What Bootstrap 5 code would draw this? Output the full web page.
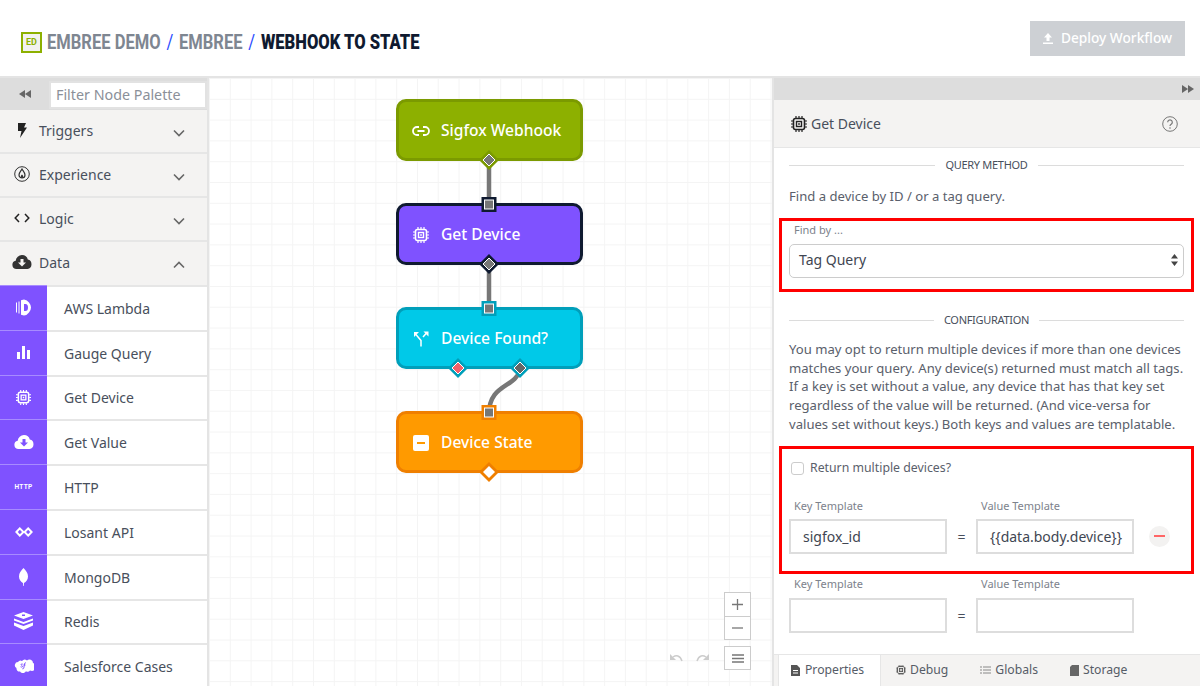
<!DOCTYPE html>
<html lang="en">
<head>
  <meta charset="UTF-8">
  <title>Webhook to State</title>
  <link href="https://cdn.jsdelivr.net/npm/bootstrap@5.3.0/dist/css/bootstrap.min.css" rel="stylesheet">
  <style>
    html, body { height: 100%; overflow: hidden; }
    body { font-family: "Noto Sans", sans-serif; color: #484f5c; font-size: 14px; background: #fff; }
    svg { display: block; flex: none; }

    .top-head { height: 78px; padding: 21px 15px 0 21px; border-bottom: 2px solid #e4e4e4; }
    .logo-box { width: 21px; height: 21px; border: 2px solid #8db000; background: #f2f2f0; color: #8db000; font: 700 9px/17px "Roboto", sans-serif; text-align: center; margin-right: 5px; margin-top: 11px; }
    .crumbs { font-family: "Roboto", sans-serif; font-weight: 700; font-size: 20px; line-height: 34px; color: #7e8691; margin-top: 4px; white-space: nowrap; transform: scaleX(.827); transform-origin: left center; }
    .crumbs i { font-style: normal; color: #2a4cff; margin: 0 7px; font-weight: 400; }
    .crumbs b { color: #0f1a30; }
    .deploy-btn { width: 155px; height: 35px; background: #cdd0d4; color: #fff; font-size: 13.7px; font-weight: 500; border: 0; border-radius: 0; padding: 0; }

    .work-area { height: 608px; }

    .palette { width: 209px; border-right: 2px solid #e4e4e4; background: #fff; overflow: hidden; }
    .tool-strip { height: 32px; background: #ddd; }
    .tool-strip .collapse-btn { width: 49px; color: #666; }
    .filter-box { width: 158px; height: 28px; margin-top: 3px; border: 2px solid #e2e2e2; background: #fff; padding: 0 5px; color: #8b9099; font-size: 14.3px; line-height: 24px; white-space: nowrap; }
    .group-row { height: 44px; background: #f4f3f2; border-bottom: 2px solid #e6e6e6; padding: 0 22px 2px 13px; font-size: 14px; }
    .group-row.last-group { height: 43px; border-bottom: 0; padding-bottom: 3px; }
    .group-row .lbl { margin-left: 8px; flex-grow: 1; }
    .group-row .chev { margin-top: 5px; color: #666; }
    .group-ico { width: 18px; display: flex; justify-content: center; color: #333; }
    .node-row { height: 44.8px; border-top: 2px solid #e6e6e6; font-size: 14px; }
    .node-ico { width: 47px; height: calc(100% + 2px); margin-top: -2px; background: #7f52ff; border-top: 1px solid #a78bff; color: #fff; display: flex; align-items: center; justify-content: center; font: 700 6.5px "Roboto", sans-serif; letter-spacing: .3px; }
    .node-row .lbl { margin-left: 17px; }

    .flow-canvas { flex: 1 1 0; position: relative; overflow: hidden; background-color: #fff;
      background-image: linear-gradient(#f4f4f4 1px, transparent 1px), linear-gradient(90deg, #f4f4f4 1px, transparent 1px);
      background-size: 20.8px 20.8px; background-position: 0 0; }
    .wf-node { position: absolute; left: 187px; width: 187px; height: 62px; border: 3px solid; border-radius: 10px; color: #fff; font-size: 15.6px; font-weight: 500; display: flex; align-items: center; padding: 2px 0 0 13px; }
    .wf-node .ico-slot { width: 18px; display: flex; justify-content: center; }
    .wf-node .lbl { margin-left: 11px; }
    .wf-webhook { top: 21px; background: #8db000; border-color: #7b9a00; }
    .wf-device { top: 125px; background: #7f52ff; border-color: #0f1a30; }
    .wf-found { top: 229px; background: #00c9e8; border-color: #009fba; }
    .wf-state { top: 333px; background: #ff9a00; border-color: #ef7f00; }
    .wf-lines { position: absolute; left: 0; top: 0; }
    .zoom-stack { position: absolute; left: 515px; top: 514px; width: 27px; border: 1px solid #ccc; background: #fff; color: #777; }
    .zoom-stack div { height: 23px; display: flex; align-items: center; justify-content: center; }
    .zoom-stack div + div { border-top: 1px solid #ccc; }
    .undo-group { position: absolute; left: 454px; top: 568px; display: flex; color: #ccc; }
    .undo-group div { width: 26px; height: 23px; display: flex; align-items: center; justify-content: center; }
    .menu-btn { position: absolute; left: 515px; top: 568px; width: 27px; height: 24px; border: 1px solid #ccc; background: #fff; display: flex; align-items: center; justify-content: center; color: #777; }

    .prop-panel { width: 428px; border-left: 2px solid #e4e4e4; position: relative; overflow: hidden; }
    .prop-strip { height: 22px; background: #ddd; padding-right: 6px; color: #666; }
    .prop-head { height: 48px; background: #f4f3f2; border-bottom: 1px solid #e6e6e6; padding: 0 22px 0 17px; font-size: 14px; }
    .prop-body { padding: 0 16px 0 15px; }
    .sec-title { font-size: 11px; color: #484f5c; letter-spacing: -.3px; height: 18px; margin-top: 8px; }
    .sec-title.second { margin-top: 19px; }
    .sec-title::before, .sec-title::after { content: ""; flex: 1; height: 1px; background: #dcdcdc; margin-top: 1px; }
    .sec-title span { padding: 0 10px; }
    .help-text { font-size: 13.1px; line-height: 18.8px; color: #5a606b; white-space: nowrap; }
    .find-text { margin-top: 13px; margin-bottom: 12px; }
    .config-text { margin-top: 11px; margin-bottom: 12.5px; }
    .red-box { border: 3px solid #f00; margin: 0 -10px; padding: 0 7px; }
    .find-box { padding-top: 2px; padding-bottom: 11px; }
    .tag-box { padding-top: 10px; }
    .field-lbl { font-size: 11px; color: #7d828c; line-height: 14px; padding-left: 5px; }
    .key-col { width: 187px; }
    .select-box { height: 34px; margin-top: 7px; border: 1px solid #ccc; border-radius: 5px; padding: 0 5px 2px 9px; font-size: 14px; color: #3f4652; }
    .text-box { width: 158px; height: 35px; border: 2px solid #ddd; padding: 0 12px; font-size: 14px; color: #3f4652; line-height: 31px; white-space: nowrap; overflow: hidden; }
    .eq-sign { width: 29px; text-align: center; font-size: 14px; }
    .check-line { font-size: 12.3px; line-height: 18.7px; color: #5a606b; margin-bottom: 21px; }
    .check-mark { width: 13px; height: 13px; border: 1px solid #ccc; border-radius: 3px; background: #fff; margin: 0 6px 0 2px; }
    .input-line { margin-top: 6px; margin-bottom: 17px; }
    .minus-btn { width: 21px; height: 21px; border-radius: 50%; background: #f3f2f1; margin-left: 15px; display: flex; align-items: center; justify-content: center; }
    .minus-btn span { width: 11px; height: 2px; background: #f66; }
    .extra-labels { margin-top: 3px; }
    .extra-inputs { margin-top: 7px; }
    .tab-row { position: absolute; left: 0; right: 0; bottom: 0; height: 32px; background: #f4f3f2; border-top: 1px solid #e6e6e6; padding-left: 4px; font-size: 12.2px; gap: 32px; }
    .tab-item { display: flex; align-items: center; gap: 4px; height: 31px; color: #565c67; padding-bottom: 1px; }
    .tab-item.on { width: 103px; gap: 5px; background: #fff; border: 1px solid #e6e6e6; border-bottom: 0; height: 32px; margin-top: -1px; padding-left: 12px; margin-right: -17px; }
  </style>
</head>
<body>

<svg width="0" height="0" class="position-absolute">
  <defs>
    <symbol id="i-chip" viewBox="0 0 16 16"><g fill="none" stroke="currentColor"><rect x="2.500" y="2.500" width="11" height="11" rx="2" stroke-width="1.600"/><path stroke-width="1.200" d="M5 0v2M8 0v2M11 0v2M5 14v2M8 14v2M11 14v2M0 5h2M0 8h2M0 11h2M14 5h2M14 8h2M14 11h2"/><rect x="5.500" y="5.500" width="5" height="5" stroke-width="1.400"/></g><rect x="7.200" y="7.200" width="1.600" height="1.600" fill="currentColor"/></symbol>
    <symbol id="i-cloud" viewBox="0 0 20 14"><path fill="currentColor" fill-rule="evenodd" d="M4.500 14A4.200 4.200 0 0 1 3.700 5.700 6.300 6.300 0 0 1 10 0a6 6 0 0 1 5.800 4.600A4.800 4.800 0 0 1 15.500 14zM8.500 4v3.500H6L10 11.500l4-4h-2.500V4z"/></symbol>
    <symbol id="i-rewind" viewBox="0 0 12 8"><path fill="currentColor" d="M6 0v8L0 4zM12 0v8L6 4z"/></symbol>
    <symbol id="i-forward" viewBox="0 0 12 8"><path fill="currentColor" d="M0 0v8l6-4zM6 0v8l6-4z"/></symbol>
    <symbol id="i-down" viewBox="0 0 12 8"><path fill="none" stroke="currentColor" stroke-width="1.600" d="M1 1.500l5 5 5-5"/></symbol>
    <symbol id="i-up" viewBox="0 0 12 8"><path fill="none" stroke="currentColor" stroke-width="1.600" d="M1 6.500l5-5 5 5"/></symbol>
  </defs>
</svg>

<header class="top-head d-flex justify-content-between">
  <div class="d-flex align-items-start">
    <div class="logo-box">ED</div>
    <div class="crumbs">EMBREE DEMO<i>/</i>EMBREE<i>/</i><b>WEBHOOK TO STATE</b></div>
  </div>
  <button class="deploy-btn d-flex align-items-center justify-content-center gap-2" type="button">
    <svg width="10" height="11" viewBox="0 0 10 11"><path fill="#fff" d="M5 0l4 4.500H6.500V8h-3V4.500H1zM0 9.500h10V11H0z"/></svg>
    Deploy Workflow
  </button>
</header>

<div class="work-area d-flex">
  <aside class="palette flex-shrink-0">
    <div class="tool-strip d-flex">
      <div class="collapse-btn d-flex align-items-center justify-content-center"><svg width="12" height="8"><use href="#i-rewind"/></svg></div>
      <div class="filter-box">Filter Node Palette</div>
    </div>
    <div class="group-row d-flex align-items-center">
      <span class="group-ico"><svg width="10" height="15" viewBox="0 0 10 15"><path fill="#222" d="M1 0h8L7 4.500h3L3 15l1.500-7H1z"/></svg></span>
      <span class="lbl">Triggers</span><svg class="chev" width="12" height="8"><use href="#i-down"/></svg>
    </div>
    <div class="group-row d-flex align-items-center">
      <span class="group-ico"><svg width="16" height="16" viewBox="0 0 16 16"><circle cx="8" cy="8" r="7.300" fill="none" stroke="#333" stroke-width="1"/><path fill="none" stroke="#333" stroke-width="1.200" d="M8 3c1 2 3 3.500 3 6a3 3 0 0 1-6 0c0-2.500 2-4 3-6z"/><path fill="#333" d="M8 8.500c.7.800 1.300 1.400 1.300 2.200a1.300 1.300 0 0 1-2.600 0c0-.8.600-1.400 1.300-2.200z"/></svg></span>
      <span class="lbl">Experience</span><svg class="chev" width="12" height="8"><use href="#i-down"/></svg>
    </div>
    <div class="group-row d-flex align-items-center">
      <span class="group-ico"><svg width="16" height="10" viewBox="0 0 16 10"><path fill="none" stroke="#222" stroke-width="1.500" d="M5 1L1.200 5 5 9M11 1l3.800 4L11 9"/></svg></span>
      <span class="lbl">Logic</span><svg class="chev" width="12" height="8"><use href="#i-down"/></svg>
    </div>
    <div class="group-row last-group d-flex align-items-center">
      <span class="group-ico"><svg width="20" height="14"><use href="#i-cloud"/></svg></span>
      <span class="lbl">Data</span><svg class="chev" width="12" height="8"><use href="#i-up"/></svg>
    </div>
    <div class="node-row d-flex align-items-center">
      <span class="node-ico"><svg width="16" height="17" viewBox="0 0 16 16"><path fill="#fff" fill-rule="evenodd" d="M0 3h1v10H0zM2.500 2h1v12h-1zM5 .8L8 0a7 7 0 0 1 5 3 8 8 0 0 1 0 10 7 7 0 0 1-5 3l-3-.8zM8 4.500v7h1.500a2.500 3.500 0 0 0 0-7z"/></svg></span>
      <span class="lbl">AWS Lambda</span>
    </div>
    <div class="node-row d-flex align-items-center">
      <span class="node-ico"><svg width="13" height="13" viewBox="0 0 13 13"><path fill="#fff" d="M0 6h3v7H0zM5 0h3v13H5zM10 4h3v9h-3z"/></svg></span>
      <span class="lbl">Gauge Query</span>
    </div>
    <div class="node-row d-flex align-items-center">
      <span class="node-ico"><svg width="15" height="15"><use href="#i-chip"/></svg></span>
      <span class="lbl">Get Device</span>
    </div>
    <div class="node-row d-flex align-items-center">
      <span class="node-ico"><svg width="20" height="14"><use href="#i-cloud"/></svg></span>
      <span class="lbl">Get Value</span>
    </div>
    <div class="node-row d-flex align-items-center">
      <span class="node-ico">HTTP</span>
      <span class="lbl">HTTP</span>
    </div>
    <div class="node-row d-flex align-items-center">
      <span class="node-ico"><svg width="18" height="10" viewBox="0 0 18 10"><path fill="none" stroke="#fff" stroke-width="2" d="M4.800 1.400L8.400 5 4.800 8.600 1.400 5zM13.200 1.400L16.600 5 13.200 8.600 9.600 5z"/></svg></span>
      <span class="lbl">Losant API</span>
    </div>
    <div class="node-row d-flex align-items-center">
      <span class="node-ico"><svg width="9" height="18" viewBox="0 0 9 18"><path fill="#fff" d="M4.500 0c2.500 2.500 4.500 5 4.500 8.500 0 3-2 5.500-4 6.500l-.2 3h-.6l-.2-3c-2-1-4-3.500-4-6.500C0 5 2 2.500 4.500 0z"/></svg></span>
      <span class="lbl">MongoDB</span>
    </div>
    <div class="node-row d-flex align-items-center">
      <span class="node-ico"><svg width="19" height="18" viewBox="0 0 19 18"><path fill="#fff" d="M9.500 0L19 3.500 9.500 7 0 3.500zM0 6.500L9.500 10 19 6.500v2L9.500 12 0 8.500zM0 10.500L9.500 14 19 10.500v3L9.500 18 0 13.500z"/><path fill="#7f52ff" d="M8 2.500h3v1.500H8z"/></svg></span>
      <span class="lbl">Redis</span>
    </div>
    <div class="node-row d-flex align-items-center">
      <span class="node-ico"><svg width="20" height="14" viewBox="0 0 20 14"><path fill="#fff" d="M8 2a3.500 3.500 0 0 1 5-.5A3.500 3.500 0 0 1 19 4a4 4 0 0 1-3 7.500 3 3 0 0 1-4 .8 3.500 3.500 0 0 1-6 .2A3 3 0 0 1 2.500 9 3.200 3.200 0 0 1 4 3a3 3 0 0 1 4-1z"/><path fill="none" stroke="#7f52ff" stroke-width="1" d="M8.800 5.200c-1.500-.8-2.500.6-1 1.300s.5 2.200-1.200 1.300M12 4c-1-.4-1.500.2-1.500 1l-.7 4c-.2.800-.8 1-1.500.7M9.500 6h2"/></svg></span>
      <span class="lbl">Salesforce Cases</span>
    </div>
  </aside>

  <main class="flow-canvas">
    <svg class="wf-lines" width="563" height="608">
      <path fill="none" stroke="#777" stroke-width="4.500" d="M280 88V128M280 192V232"/>
      <path fill="none" stroke="#777" stroke-width="4.500" d="M311 292C306 310 280 306 280 336"/>
    </svg>
    <div class="wf-node wf-webhook">
      <span class="ico-slot"><svg width="18" height="10" viewBox="0 0 18 10"><path fill="none" stroke="#fff" stroke-width="1.800" d="M7 1H5a4 4 0 0 0 0 8h2M11 1h2a4 4 0 0 1 0 8h-2M5.500 5h7"/></svg></span>
      <span class="lbl">Sigfox Webhook</span>
    </div>
    <div class="wf-node wf-device">
      <span class="ico-slot"><svg width="16" height="16"><use href="#i-chip"/></svg></span>
      <span class="lbl">Get Device</span>
    </div>
    <div class="wf-node wf-found">
      <span class="ico-slot"><svg width="16" height="16" viewBox="0 0 16 16"><path fill="none" stroke="#fff" stroke-width="1.500" d="M8 15.500V9.500L2.500 3M13.500 2L10 6"/><path fill="#fff" d="M1 1h5L1 6zM15.500 .5v5l-5-5z"/></svg></span>
      <span class="lbl">Device Found?</span>
    </div>
    <div class="wf-node wf-state">
      <span class="ico-slot"><svg width="16" height="16" viewBox="0 0 16 16"><rect width="16" height="16" rx="2" fill="#fff"/><rect x="4" y="7" width="8" height="2" fill="#ff9a00"/></svg></span>
      <span class="lbl">Device State</span>
    </div>
    <svg class="wf-lines" width="563" height="608">
      <!-- output and input ports -->
      <path fill="#7b9a00" d="M280 72l10 10-10 10-10-10z"/><path fill="#777" stroke="#fff" stroke-width="1" d="M280 76l6 6-6 6-6-6z"/>
      <rect x="272.500" y="119" width="15" height="15" fill="#0f1a30"/><rect x="275.500" y="122" width="9" height="9" fill="#777" stroke="#fff"/>
      <path fill="#0f1a30" d="M280 176l10 10-10 10-10-10z"/><path fill="#777" stroke="#fff" stroke-width="1" d="M280 180l6 6-6 6-6-6z"/>
      <rect x="272.500" y="223" width="15" height="15" fill="#009fba"/><rect x="275.500" y="226" width="9" height="9" fill="#777" stroke="#fff"/>
      <path fill="#009fba" d="M249 280l10 10-10 10-10-10z"/><path fill="#f0606a" stroke="#fff" stroke-width="1" d="M249 284l6 6-6 6-6-6z"/>
      <path fill="#009fba" d="M311 280l10 10-10 10-10-10z"/><path fill="#666" stroke="#fff" stroke-width="1" d="M311 284l6 6-6 6-6-6z"/>
      <rect x="272.500" y="327" width="15" height="15" fill="#ef7f00"/><rect x="275.500" y="330" width="9" height="9" fill="#777" stroke="#fff"/>
      <path fill="#ef7f00" d="M280 384l10 10-10 10-10-10z"/><path fill="#fff" d="M280 388l6 6-6 6-6-6z"/>
    </svg>
    <div class="zoom-stack">
      <div><svg width="11" height="11" viewBox="0 0 11 11"><path stroke="currentColor" stroke-width="1.300" d="M5.500 0v11M0 5.500h11"/></svg></div>
      <div><svg width="11" height="2" viewBox="0 0 11 2"><path stroke="currentColor" stroke-width="1.300" d="M0 1h11"/></svg></div>
    </div>
    <div class="undo-group">
      <div><svg width="13" height="8" viewBox="0 0 13 8"><path fill="none" stroke="currentColor" stroke-width="1.500" d="M3 3c3-2 7-2 9 4"/><path fill="currentColor" d="M0 0v6h6z"/></svg></div>
      <div><svg width="13" height="8" viewBox="0 0 13 8"><path fill="none" stroke="currentColor" stroke-width="1.500" d="M10 3C7 1 3 1 1 7"/><path fill="currentColor" d="M13 0v6H7z"/></svg></div>
    </div>
    <div class="menu-btn"><svg width="12" height="9" viewBox="0 0 12 9"><path stroke="currentColor" stroke-width="1.300" d="M0 1h12M0 4.500h12M0 8h12"/></svg></div>
  </main>

  <section class="prop-panel flex-shrink-0">
    <div class="prop-strip d-flex align-items-center justify-content-end"><svg width="12" height="8"><use href="#i-forward"/></svg></div>
    <div class="prop-head d-flex align-items-center gap-1">
      <svg width="16" height="16" color="#222"><use href="#i-chip"/></svg>
      <span class="flex-grow-1">Get Device</span>
      <svg width="16" height="16" viewBox="0 0 16 16"><circle cx="8" cy="8" r="7.300" fill="none" stroke="#777" stroke-width="1"/><path fill="none" stroke="#777" stroke-width="1.200" d="M5.700 6.200a2.300 2.300 0 1 1 3.500 2c-.8.500-1.200.9-1.200 1.800"/><circle cx="8" cy="12" r=".8" fill="#777"/></svg>
    </div>
    <div class="prop-body">
      <div class="sec-title d-flex align-items-center"><span>QUERY METHOD</span></div>
      <div class="help-text find-text">Find a device by ID / or a tag query.</div>
      <div class="red-box find-box">
        <div class="field-lbl">Find by ...</div>
        <div class="select-box d-flex align-items-center justify-content-between">
          <span>Tag Query</span>
          <svg width="7" height="12" viewBox="0 0 7 12"><path fill="#444" d="M3.500 0L7 4.500H0zM3.500 12L0 7.500h7z"/></svg>
        </div>
      </div>
      <div class="sec-title second d-flex align-items-center"><span>CONFIGURATION</span></div>
      <div class="help-text config-text">You may opt to return multiple devices if more than one devices<br>matches your query. Any device(s) returned must match all tags.<br>If a key is set without a value, any device that has that key set<br>regardless of the value will be returned. (And vice-versa for<br>values set without keys.) Both keys and values are templatable.</div>
      <div class="red-box tag-box">
        <div class="check-line d-flex align-items-center"><span class="check-mark"></span>Return multiple devices?</div>
        <div class="d-flex">
          <div class="field-lbl key-col">Key Template</div>
          <div class="field-lbl">Value Template</div>
        </div>
        <div class="input-line d-flex align-items-center">
          <div class="text-box">sigfox_id</div><div class="eq-sign">=</div><div class="text-box">{{data.body.device}}</div>
          <div class="minus-btn"><span></span></div>
        </div>
      </div>
      <div class="extra-labels d-flex">
        <div class="field-lbl key-col">Key Template</div>
        <div class="field-lbl">Value Template</div>
      </div>
      <div class="extra-inputs d-flex align-items-center">
        <div class="text-box"></div><div class="eq-sign">=</div><div class="text-box"></div>
      </div>
    </div>
    <div class="tab-row d-flex">
      <div class="tab-item on"><svg width="9" height="11" viewBox="0 0 9 11"><path fill="#555" fill-rule="evenodd" d="M0 0h6l3 3v8H0zM2 5v1h5V5zM2 7.500v1h5v-1z"/></svg>Properties</div>
      <div class="tab-item"><svg width="10" height="10" color="#555"><use href="#i-chip"/></svg>Debug</div>
      <div class="tab-item"><svg width="11" height="8" viewBox="0 0 11 8"><path stroke="#888" stroke-width="1" d="M0 1h2M3 1h8M0 4h2M3 4h8M0 7h2M3 7h8"/></svg>Globals</div>
      <div class="tab-item"><svg width="9" height="11" viewBox="0 0 9 11"><path fill="#666" d="M2 0h7v11H0V2z"/></svg>Storage</div>
    </div>
  </section>
</div>

</body>
</html>
